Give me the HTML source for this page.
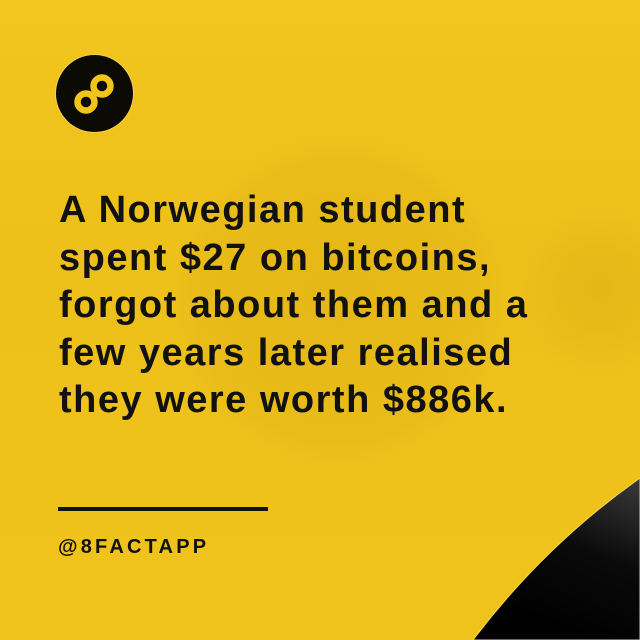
<!DOCTYPE html>
<html><head><style>
html,body{margin:0;padding:0}
body{width:640px;height:640px;position:relative;overflow:hidden;background:#efc21c;font-family:"Liberation Sans",sans-serif}
.bg{position:absolute;inset:0;background:
radial-gradient(circle at 340px 300px, rgba(170,130,0,0.14) 0, rgba(170,130,0,0.08) 140px, rgba(0,0,0,0) 170px),
radial-gradient(circle at 600px 290px, rgba(150,110,0,0.12) 0, rgba(0,0,0,0) 90px),
linear-gradient(180deg,#f2c61e 0,#eec01a 40%,#efc21c 100%)}
.logo{position:absolute;left:56px;top:55px;width:77px;height:77px;border-radius:50%;background:#0c0a05;box-shadow:0 0 0 1px #f5d24a}
.t{position:absolute;left:59px;top:187px;font-size:38px;font-weight:bold;line-height:47.5px;color:#111;letter-spacing:1.5px;white-space:nowrap}
.rule{position:absolute;left:58px;top:507px;width:210px;height:4px;background:#111}
.h{position:absolute;left:58px;top:536px;font-size:20px;font-weight:bold;color:#111;letter-spacing:3.2px}
svg.c{position:absolute;left:0;top:0}
</style></head><body>
<div class="bg"></div>
<div class="logo"><svg width="77" height="77" viewBox="0 0 77 77"><g fill="none" stroke="#f0c419" stroke-width="6.5"><circle cx="46" cy="31" r="8.5"/><circle cx="30" cy="47" r="8.5"/></g><path d="M41 36 L35 42" stroke="#f0c419" stroke-width="7"/></svg></div>
<div class="t">A Norwegian student<br>spent $27 on bitcoins,<br>forgot about them and a<br>few years later realised<br>they were worth $886k.</div>
<div class="rule"></div>
<div class="h">@8FACTAPP</div>
<svg class="c" width="640" height="640"><defs><linearGradient id="g" x1="1" y1="0" x2="0.6" y2="1"><stop offset="0" stop-color="#3a3a3a"/><stop offset="0.5" stop-color="#0a0a0a"/><stop offset="1" stop-color="#000"/></linearGradient></defs>
<path d="M640 478 Q545 545 473 640 L640 640 Z" fill="url(#g)" stroke="#f7d74a" stroke-width="1"/></svg>
</body></html>
